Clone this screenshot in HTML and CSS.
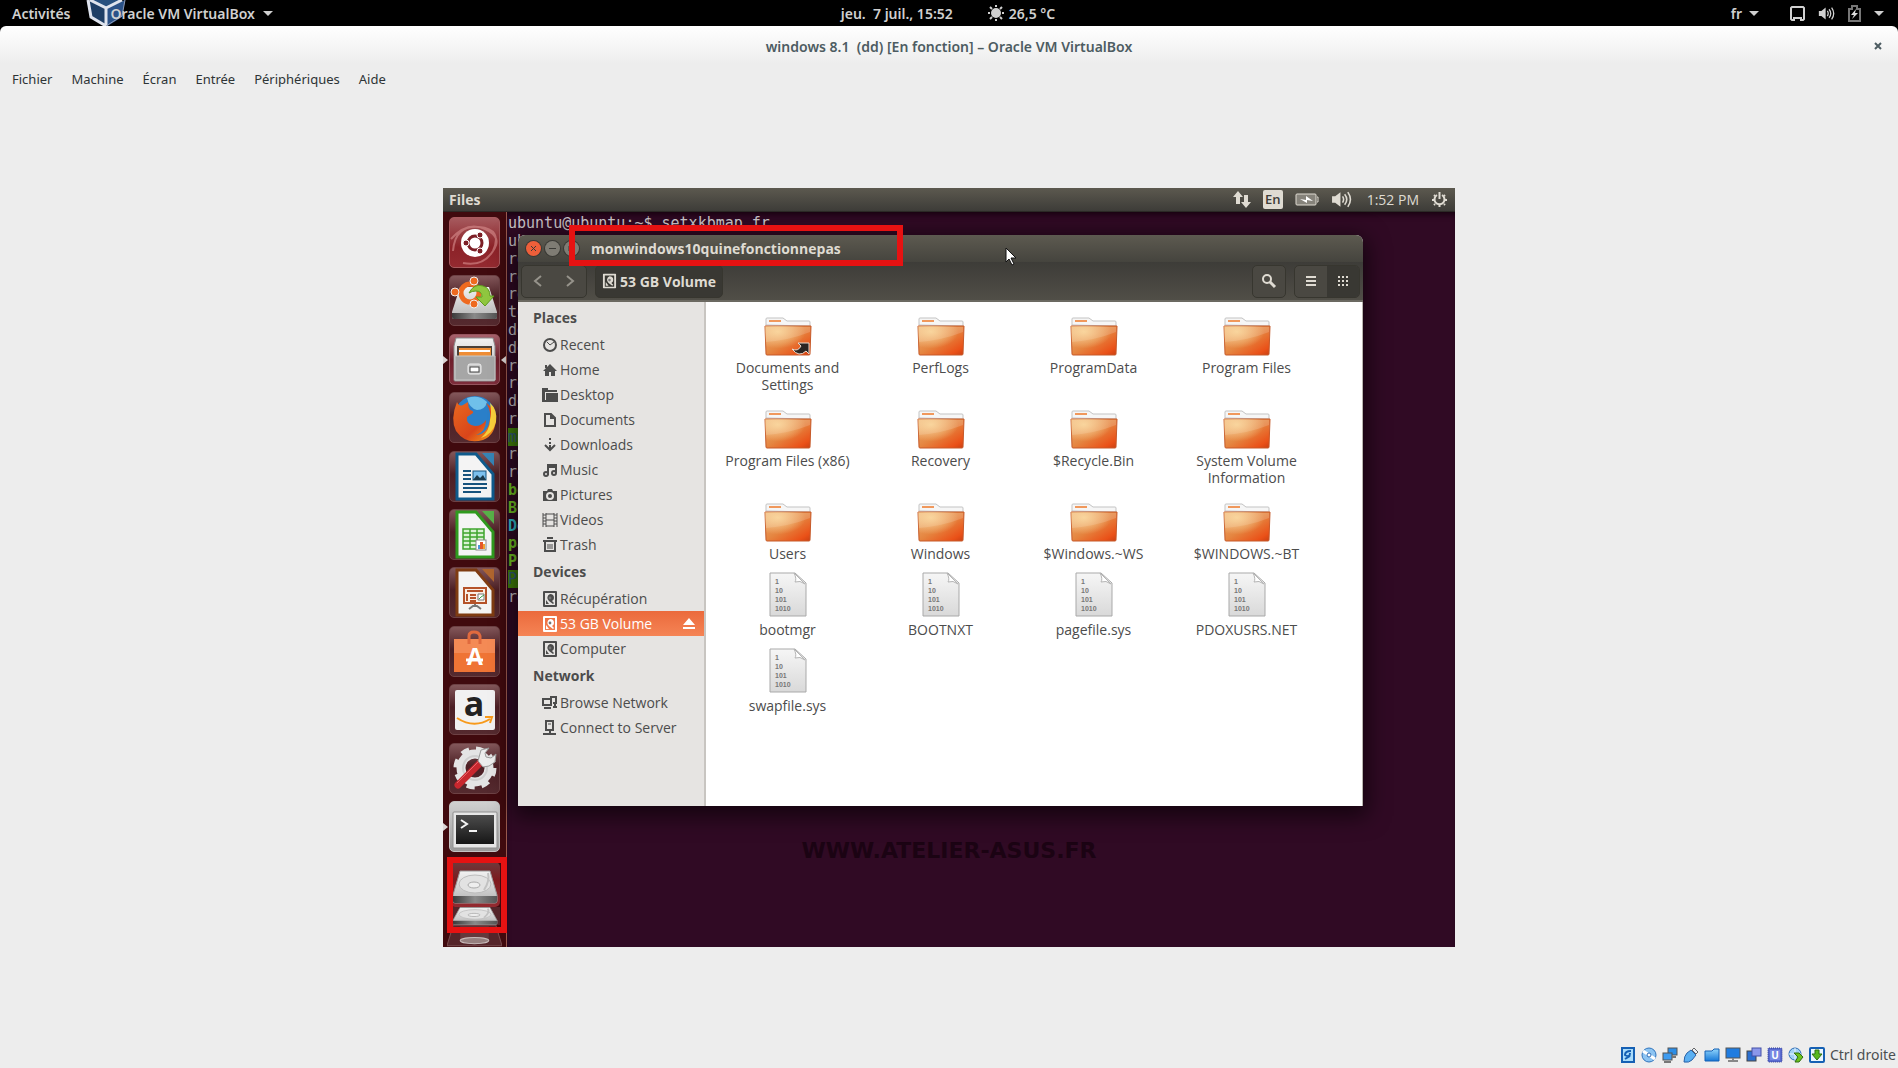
FILE: index.html
```
<!DOCTYPE html>
<html lang="fr">

<head>
    <meta charset="UTF-8">
    <meta name="viewport" content="width=device-width, initial-scale=1.0">
    <title>windows 8.1 (dd) [En fonction] – Oracle VM VirtualBox</title>
    <link rel="stylesheet" href="styles.css">
</head>

<body>
    <!-- Shared icon shapes -->
    <svg class="sprite" width="0" height="0" aria-hidden="true">
        <defs>
            <linearGradient id="gFolder" x1="0" y1="0" x2="1" y2="1">
                <stop offset="0" stop-color="#eeb173" />
                <stop offset="0.5" stop-color="#e58540" />
                <stop offset="0.85" stop-color="#ea5118" />
                <stop offset="1" stop-color="#c93f12" />
            </linearGradient>
            <radialGradient id="gGlow" cx="0.28" cy="0.2" r="0.6">
                <stop offset="0" stop-color="#fbdca4" stop-opacity="0.85" />
                <stop offset="1" stop-color="#fbdca4" stop-opacity="0" />
            </radialGradient>
            <linearGradient id="gPaper" x1="0" y1="0" x2="0" y2="1">
                <stop offset="0" stop-color="#f6f6f6" />
                <stop offset="1" stop-color="#d9d9d9" />
            </linearGradient>
            <linearGradient id="gMetal" x1="0" y1="0" x2="0" y2="1">
                <stop offset="0" stop-color="#f2f2f2" />
                <stop offset="1" stop-color="#b4b4b4" />
            </linearGradient>
            <linearGradient id="gDark" x1="0" y1="0" x2="1" y2="0">
                <stop offset="0" stop-color="#3a3a3a" />
                <stop offset="0.5" stop-color="#8a8a8a" />
                <stop offset="1" stop-color="#555" />
            </linearGradient>
            <linearGradient id="gFox" x1="0" y1="0" x2="1" y2="1">
                <stop offset="0" stop-color="#e8681f" />
                <stop offset="0.6" stop-color="#d9451a" />
                <stop offset="1" stop-color="#f7a81c" />
            </linearGradient>
            <linearGradient id="gBlue" x1="0" y1="0" x2="0" y2="1">
                <stop offset="0" stop-color="#8fd4fb" />
                <stop offset="1" stop-color="#1678d8" />
            </linearGradient>
            <linearGradient id="gShell" x1="0" y1="0" x2="0" y2="1">
                <stop offset="0" stop-color="#4c4c4c" />
                <stop offset="1" stop-color="#161616" />
            </linearGradient>

            <symbol id="folder" viewBox="0 0 48 47">
                <path d="M2 16V10q0-1 1-1h16l4 3h22q1 0 1 1v4z" fill="#f6f6f6" stroke="#c3c3c3" />
                <path d="M5 12h12" stroke="#f0985c" stroke-width="2" />
                <path d="M1 17h46l-1 28q0 1-1 1H3q-1 0-1-1z" fill="url(#gFolder)" stroke="#c65a2a" />
                <path d="M2 18h44v5Q26 31 2 33z" fill="#fff" opacity="0.16" />
                <path d="M1 17h46l-1 28H2z" fill="url(#gGlow)" />
            </symbol>
            <symbol id="binary" viewBox="0 0 48 47">
                <path d="M6 2h25l11 10v33H6z" fill="url(#gPaper)" stroke="#a9a9a9" />
                <path d="M30 2q3 6 1 9 5-2 10 2z" fill="#fff" stroke="#b5b5b5" />
                <g font-family="Liberation Sans" font-weight="bold" font-size="7" fill="#777">
                    <text x="11" y="13">1</text>
                    <text x="11" y="22">10</text>
                    <text x="11" y="31">101</text>
                    <text x="11" y="40">1010</text>
                </g>
            </symbol>
            <symbol id="disk" viewBox="0 0 16 16">
                <path fill-rule="evenodd" d="M2 0h12q1 0 1 1v14q0 1-1 1H2q-1 0-1-1V1q0-1 1-1zM3 2v12h10V2z" />
                <path d="M8 3a4 4 0 0 1 4 4q0 2-2 3l2 2-1 1-4-3a4 4 0 0 1 1-7z" />
                <circle class="hole" cx="8" cy="7" r="1.4" />
                <path d="M4 13V9l3 4z" />
            </symbol>
            <symbol id="sound" viewBox="0 0 20 16">
                <path d="M1 5h3l5-4v14l-5-4H1z" fill="currentColor" />
                <path d="M11 5q2 3 0 6M13 3q4 5 0 10M16 1q5 7 0 14" fill="none" stroke="currentColor" stroke-width="1.5" />
            </symbol>
            <symbol id="drive" viewBox="0 0 46 34">
                <path d="M8 1h30l7 24v6q0 2-2 2H3q-2 0-2-2v-6z" fill="url(#gMetal)" stroke="#999" />
                <path d="M1 26h44v5q0 2-2 2H3q-2 0-2-2z" fill="url(#gDark)" />
                <ellipse cx="23" cy="14" rx="16" ry="9" fill="#e2e2e2" stroke="#bdbdbd" />
                <ellipse cx="22" cy="15" rx="6" ry="3" fill="#eee" stroke="#aaa" />
                <path d="M36 3q2 8-4 17" fill="none" stroke="#c2c2c2" stroke-width="2" />
            </symbol>
        </defs>
    </svg>

    <header class="topbar">
        <div class="topbar-left">
            <button>Activités</button>
            <button class="app-menu">
                <svg class="cube" viewBox="0 0 40 26">
                    <path d="M1 0L4 17 20 27V8z" fill="#1f3f66" />
                    <path d="M39 0l-3 17-16 10V8z" fill="#2b5288" />
                    <path d="M6 0l14 8L34 0z" fill="#27507f" />
                    <path d="M2 0l3 17 15 9V8L4 0M20 8L36 0" fill="none" stroke="#dfe4ee" stroke-width="3" />
                    <path d="M20 26l16-10 3-16" fill="none" stroke="#8e9cb8" stroke-width="1" />
                </svg>
                <span>Oracle VM VirtualBox</span>
                <i class="caret"></i>
            </button>
        </div>
        <div class="topbar-center">
            <span class="date">jeu. &nbsp;7 juil., 15:52</span>
            <svg width="18" height="18" viewBox="0 0 18 18" fill="#d0d0d0">
                <circle cx="9" cy="9" r="5" />
                <path d="M9 1v2M9 15v2M1 9h2M15 9h2M3 3l2 2M13 13l2 2M3 15l2-2M13 5l2-2" stroke="#d0d0d0" stroke-width="2" />
            </svg>
            <span>26,5 °C</span>
        </div>
        <div class="topbar-right">
            <button class="lang">fr <i class="caret"></i></button>
            <svg width="15" height="15" viewBox="0 0 15 15"><path d="M2 1h11l1 1v11l-1 1h-2v-2H4v2H2l-1-1V2z" fill="none" stroke="#d0d0d0" stroke-width="2" /></svg>
            <svg width="17" height="15" viewBox="0 0 20 16"><use href="#sound" /></svg>
            <svg width="13" height="17" viewBox="0 0 13 17">
                <path d="M1 4h3V1h5v3h3v12H1z" fill="none" stroke="#777" stroke-width="2" />
                <path d="M8 4L3 10h3l-2 4 6-6H7z" fill="#ddd" />
            </svg>
            <i class="caret"></i>
        </div>
    </header>

    <div class="vm-window">
        <div class="vm-title">
            <h1>windows 8.1 &nbsp;(dd) [En fonction] – Oracle VM VirtualBox</h1>
            <button class="vm-close" aria-label="Fermer">
                <svg width="8" height="8" viewBox="0 0 8 8"><path d="M1 1l6 6M7 1L1 7" stroke="#4d5c62" stroke-width="2" /></svg>
            </button>
        </div>
        <nav class="vm-menu">
            <button>Fichier</button>
            <button>Machine</button>
            <button>Écran</button>
            <button>Entrée</button>
            <button>Périphériques</button>
            <button>Aide</button>
        </nav>

        <main class="vm-area">
            <div class="screen" lang="en">
                <div class="panel">
                    <strong>Files</strong>
                    <div class="indicators">
                        <svg width="18" height="17" viewBox="0 0 18 17" fill="currentColor">
                            <path d="M5 0l5 6H7v7H3V6H0z" />
                            <path d="M13 17l-5-6h3V4h4v7h3z" />
                        </svg>
                        <span class="kbd">En</span>
                        <svg width="24" height="14" viewBox="0 0 24 14">
                            <rect x="1" y="1" width="20" height="11" rx="1" fill="#86837b" stroke="#dfdbd2" />
                            <path d="M22 4h1v5h-1" fill="none" stroke="#dfdbd2" />
                            <path d="M5 6l6 1V3l7 5-6-1v3z" fill="#fff" />
                        </svg>
                        <svg width="21" height="17" viewBox="0 0 20 16"><use href="#sound" /></svg>
                        <span class="clock">1:52 PM</span>
                        <svg width="17" height="17" viewBox="0 0 17 17" fill="none" stroke="currentColor">
                            <path d="M6 4a5 5 0 1 0 5 0" stroke-width="2" />
                            <path d="M8.500 1v7" stroke-width="2" />
                            <path d="M1 9h2M14 9h2M8.500 14v2M3 4l1 1M14 4l-1 1M3 14l1-1M14 14l-1-1" stroke-width="2" />
                        </svg>
                    </div>
                </div>

                <div class="desktop">
                    <aside class="launcher">
                        <ul class="apps">
                            <li class="tile dash">
                                <svg viewBox="0 0 51 51">
                                    <path d="M4 34Q6 8 30 10T44 34Q34 50 14 46M2 22Q18 4 36 12t8 22" fill="none" stroke="#d98f8f" stroke-width="2" opacity="0.6" />
                                    <circle cx="26" cy="26" r="14" fill="#fff" />
                                    <circle cx="26" cy="26" r="7" fill="none" stroke="#7d1f26" stroke-width="3" />
                                    <g fill="#7d1f26" stroke="#fff" stroke-width="1">
                                        <circle cx="17" cy="26" r="3" />
                                        <circle cx="31" cy="18" r="3" />
                                        <circle cx="31" cy="34" r="3" />
                                    </g>
                                </svg>
                            </li>
                            <li class="tile">
                                <svg viewBox="0 0 51 51">
                                    <path d="M11 12h29l8 25v5q0 2-2 2H5q-2 0-2-2v-5z" fill="url(#gMetal)" />
                                    <path d="M3 38h45v4q0 2-2 2H5q-2 0-2-2z" fill="url(#gDark)" />
                                    <circle cx="21" cy="18" r="9" fill="none" stroke="#ee6a20" stroke-width="5" />
                                    <g fill="#ee6a20" stroke="#f0efee">
                                        <circle cx="6" cy="17" r="4" />
                                        <circle cx="25" cy="6" r="4" />
                                        <circle cx="25" cy="29" r="4" />
                                    </g>
                                    <path d="M20 18Q25 8 34 11q7 2 7 10h4l-9 10-9-9h6q0-6-6-6-4 0-7 2z" fill="#8fc63f" stroke="#5f9a20" />
                                </svg>
                            </li>
                            <li class="tile files active running">
                                <svg viewBox="0 0 51 51">
                                    <path d="M7 4h37l2 8v34q0 1-1 1H6q-1 0-1-1V12z" fill="url(#gMetal)" stroke="#8d8d8d" />
                                    <path d="M8 12h35v12H8z" fill="#4a4038" />
                                    <path d="M10 14h32v8H10z" fill="#ef8d35" />
                                    <path d="M10 17h31" stroke="#fff" stroke-width="2" />
                                    <path d="M6 22h40v24H6z" fill="#a6a6a6" stroke="#c9c9c9" />
                                    <rect x="19" y="30" width="13" height="10" rx="2" fill="#c9c9c9" stroke="#eee" />
                                    <rect x="21" y="33" width="9" height="5" fill="#fff" stroke="#444" />
                                </svg>
                            </li>
                            <li class="tile">
                                <svg viewBox="0 0 51 51">
                                    <circle cx="26" cy="25" r="21" fill="#2a7fc9" />
                                    <path d="M18 6q12-4 20 4-2 8-10 8-8-2-10-12z" fill="#6fc0ea" />
                                    <path d="M8 10q2 5 6 3l5-3q0 5 2 8 4 1 3 3l-6 4q-1 8 8 9 7 0 11-6 0 12-10 15 12-1 14-16 1-9-4-16 8 5 10 14 0 18-13 23-17 5-27-9Q1 27 8 10z" fill="url(#gFox)" />
                                    <path d="M41 11q8 7 6 19-3 12-15 16 9-8 9-18 2-8 0-17z" fill="#f8cf3a" />
                                </svg>
                            </li>
                            <li class="tile">
                                <svg viewBox="0 0 51 51">
                                    <path d="M8 3h19l17 20v25H8z" fill="#f4f4f4" stroke="#0f5b8c" stroke-width="3" />
                                    <path d="M33 2h12v13z" fill="#3584b5" />
                                    <path d="M14 20h8M14 24h8M14 28h8M14 33h24M14 37h24M14 41h18" stroke="#17537d" stroke-width="2" />
                                    <rect x="24" y="20" width="13" height="9" fill="#7cc0ee" stroke="#17537d" />
                                    <path d="M24 29l4-5 3 3 3-3 3 5z" fill="#1b3a4c" />
                                </svg>
                            </li>
                            <li class="tile">
                                <svg viewBox="0 0 51 51">
                                    <path d="M8 3h19l17 20v25H8z" fill="#f4f4f4" stroke="#2f9a1e" stroke-width="3" />
                                    <path d="M33 2h12v13z" fill="#58b148" />
                                    <path d="M14 20h21v20H14z" fill="#d9f2d3" />
                                    <path d="M14 20h21v20H14zM14 24h21M14 28h21M14 32h21M14 36h21M21 20v20M28 20v20" fill="none" stroke="#3fa52e" stroke-width="1.500" />
                                    <rect x="27" y="31" width="10" height="10" fill="#fff" stroke="#888" />
                                    <path d="M29 36h2v4h-2z" fill="#4b97d8" />
                                    <path d="M31 33h3v7h-3z" fill="#e4572a" />
                                    <path d="M34 35h2v5h-2z" fill="#f0a22e" />
                                </svg>
                            </li>
                            <li class="tile">
                                <svg viewBox="0 0 51 51">
                                    <path d="M8 3h19l17 20v25H8z" fill="#f4f4f4" stroke="#7f3c12" stroke-width="3" />
                                    <path d="M33 2h12v13z" fill="#b0662f" />
                                    <rect x="15" y="21" width="22" height="15" fill="#fbeee4" stroke="#b5532a" stroke-width="2" />
                                    <path d="M18 24h16" stroke="#b5532a" stroke-width="2" />
                                    <path d="M18 27v7M21 28h6M21 31h6M21 34h6" stroke="#b5532a" stroke-width="2" />
                                    <path d="M29 27h6v6h-6z" fill="#fff" stroke="#777" />
                                    <path d="M30 32l2-2 3-2" stroke="#3aa34a" fill="none" />
                                    <path d="M26 37v3M20 42l4-3h4l4 3" fill="none" stroke="#777" stroke-width="2" />
                                </svg>
                            </li>
                            <li class="tile">
                                <svg viewBox="0 0 51 51">
                                    <path d="M5 13h41v33H5z" fill="#ef7435" />
                                    <path d="M5 13h41v14H5z" fill="#f48a55" />
                                    <path d="M20 18V10q0-4 5-4t6 4v8" fill="none" stroke="#e06a3e" stroke-width="3" />
                                    <text x="26" y="39" text-anchor="middle" font-family="Open Sans" font-weight="bold" font-size="23" fill="#fff">A</text>
                                    <path d="M17 34h17" stroke="#fff" stroke-width="3" />
                                </svg>
                            </li>
                            <li class="tile">
                                <svg viewBox="0 0 51 51">
                                    <rect x="6" y="6" width="40" height="40" rx="2" fill="#f1f1f1" />
                                    <text x="25" y="32" text-anchor="middle" font-family="Open Sans" font-weight="bold" font-size="34" fill="#222">a</text>
                                    <path d="M8 34q17 11 33 1" fill="none" stroke="#f79a1c" stroke-width="2" />
                                    <path d="M36 33h7l-2 6" fill="none" stroke="#f79a1c" stroke-width="2" />
                                </svg>
                            </li>
                            <li class="tile">
                                <svg viewBox="0 0 51 51">
                                    <circle cx="26" cy="25" r="14" fill="none" stroke="#e4e4e4" stroke-width="9" />
                                    <circle cx="26" cy="25" r="19" fill="none" stroke="#e4e4e4" stroke-width="5" stroke-dasharray="8 7" />
                                    <circle cx="26" cy="25" r="12" fill="none" stroke="#cfcfcf" stroke-width="2" />
                                    <path d="M9 42l24-24" stroke="#c8272e" stroke-width="7" stroke-linecap="round" />
                                    <path d="M8 40l22-22" stroke="#e8646a" stroke-width="1" />
                                    <path d="M29 18l3-11 8-2-4 5 1 4 5 1 5-4-1 8-6 4-6 1z" fill="#ececec" stroke="#9a9a9a" />
                                </svg>
                            </li>
                            <li class="tile term running">
                                <svg viewBox="0 0 51 51">
                                    <rect x="4" y="11" width="44" height="36" rx="1" fill="#e6e6e6" stroke="#8f8f8f" />
                                    <rect x="7" y="14" width="38" height="29" fill="url(#gShell)" />
                                    <path d="M12 19l6 4-6 4M20 30h8" fill="none" stroke="#f3f3f3" stroke-width="2" />
                                </svg>
                            </li>
                        </ul>
                        <ul class="drives">
                            <li class="drive mounted"><svg viewBox="0 0 46 34"><use href="#drive" /></svg></li>
                            <li class="drive folded"><svg viewBox="0 0 46 34" preserveAspectRatio="none"><use href="#drive" /></svg></li>
                            <li class="trash">
                                <svg viewBox="0 0 54 21">
                                    <path d="M6 0h42l6 20H0z" fill="#55252a" stroke="#7a4d50" />
                                    <path d="M13 1h28v13q-14 6-28 0z" fill="#64393c" />
                                    <ellipse cx="27" cy="15" rx="14" ry="3" fill="#96807f" stroke="#c9bcbb" />
                                </svg>
                            </li>
                        </ul>
                        <div class="mark mark-drives"></div>
                    </aside>

                    <div class="workspace">
                        <div class="terminal">
                            <p>ubuntu@ubuntu:~$ setxkbmap fr</p>
                            <p>ub</p>
                            <p>ro</p>
                            <p>ro</p>
                            <p>ro</p>
                            <p>to</p>
                            <p>de</p>
                            <p>de</p>
                            <p>ro</p>
                            <p>ro</p>
                            <p>de</p>
                            <p>ro</p>
                            <p><b class="ow">mo</b></p>
                            <p>ro</p>
                            <p>ro</p>
                            <p><b class="exec">bo</b></p>
                            <p><b class="exec">BO</b></p>
                            <p><b class="link">Do</b></p>
                            <p><b class="exec">pa</b></p>
                            <p><b class="exec">PD</b></p>
                            <p><b class="ow">Pr</b></p>
                            <p>ro</p>
                        </div>
                        <div class="watermark">WWW.ATELIER-ASUS.FR</div>

                        <section class="files-window">
                            <div class="titlebar">
                                <button class="dot close" aria-label="Close"><svg viewBox="0 0 15 15"><path d="M5 5l5 5M10 5l-5 5" /></svg></button>
                                <button class="dot" aria-label="Minimize"><svg viewBox="0 0 15 15"><path d="M4 7.500h7" /></svg></button>
                                <button class="dot" aria-label="Maximize"><svg viewBox="0 0 15 15"><path d="M5 5h5v5H5z" /></svg></button>
                                <h2>monwindows10quinefonctionnepas</h2>
                            </div>
                            <div class="toolbar">
                                <div class="group">
                                    <button aria-label="Back"><svg width="16" height="16" viewBox="0 0 16 16"><path d="M11 3L5 8l6 5" fill="none" stroke="#96938b" stroke-width="2" /></svg></button>
                                    <button aria-label="Forward"><svg width="16" height="16" viewBox="0 0 16 16"><path d="M5 3l6 5-6 5" fill="none" stroke="#96938b" stroke-width="2" /></svg></button>
                                </div>
                                <button class="path">
                                    <svg width="15" height="16" viewBox="0 0 16 16" fill="currentColor"><use href="#disk" /></svg>
                                    53 GB Volume
                                </button>
                                <div class="group search">
                                    <button aria-label="Search"><svg width="16" height="16" viewBox="0 0 16 16" fill="none" stroke="currentColor"><circle cx="6" cy="6" r="4" stroke-width="2" /><path d="M9 9l5 5" stroke-width="3" /></svg></button>
                                </div>
                                <div class="group views">
                                    <button aria-label="List view"><svg width="12" height="12" viewBox="0 0 12 12"><path d="M1 2h10M1 6h10M1 10h10" stroke="currentColor" stroke-width="2" /></svg></button>
                                    <button class="on" aria-label="Icon view"><svg width="12" height="12" viewBox="0 0 12 12"><path d="M1 2h10M1 6h10M1 10h10" stroke="currentColor" stroke-width="2" stroke-dasharray="2" /></svg></button>
                                </div>
                            </div>

                            <div class="files-body">
                                <nav class="sidebar">
                                    <h3>Places</h3>
                                    <a href="#"><svg viewBox="0 0 16 16"><circle class="line" cx="8" cy="8" r="6" /><path class="line thin" d="M5 5l3 3 4-3" /></svg>Recent</a>
                                    <a href="#"><svg viewBox="0 0 16 16"><path d="M8 2l7 7h-2v5H9v-4H7v4H3V9H1zM3 3h2v3H3z" /></svg>Home</a>
                                    <a href="#"><svg viewBox="0 0 16 16"><path d="M0 1h6v2h9v2H3v8H0zM4 6h12v9H4z" /><path d="M0 13h16v2H0z" /></svg>Desktop</a>
                                    <a href="#"><svg viewBox="0 0 16 16"><path class="line" d="M3 2h6l4 4v8H3z" /><path d="M8 1v6h5z" /></svg>Documents</a>
                                    <a href="#"><svg viewBox="0 0 16 16"><path d="M7 1h2v2H7zM7 5h2v2H7zM7 8h2v4H7z" /><path class="line" d="M3 8l5 5 5-5" /></svg>Downloads</a>
                                    <a href="#"><svg viewBox="0 0 16 16"><path class="line" d="M6 13V3h8v8M6 5h8" /><circle class="line" cx="4" cy="12" r="2" /><circle class="line" cx="12" cy="11" r="2" /></svg>Music</a>
                                    <a href="#"><svg viewBox="0 0 16 16"><path fill-rule="evenodd" d="M1 4h4l1-2h4l1 2h4v10H1zM8 5a4 4 0 1 0 0 8 4 4 0 0 0 0-8z" /><circle cx="8" cy="9" r="2" /></svg>Pictures</a>
                                    <a href="#"><svg viewBox="0 0 16 16"><path class="line thin" d="M1 1v14M4 1v14M12 1v14M15 1v14M4 2h8M4 8h8M4 14h8M1 3h3M1 6h3M1 9h3M1 12h3M12 3h3M12 6h3M12 9h3M12 12h3" /></svg>Videos</a>
                                    <a href="#"><svg viewBox="0 0 16 16"><path class="line" d="M3 5v9h10V5M1 4h14M5 1h6" /><path class="line thin" d="M6 7v5M8 7v5M10 7v5" /></svg>Trash</a>
                                    <h3>Devices</h3>
                                    <a href="#"><svg viewBox="0 0 16 16"><use href="#disk" /></svg>Récupération</a>
                                    <a href="#" class="selected"><svg viewBox="0 0 16 16"><use href="#disk" /></svg>53 GB Volume
                                        <svg class="eject" viewBox="0 0 14 14"><path d="M7 1l6 7H1zM1 10h12v2H1z" /></svg></a>
                                    <a href="#"><svg viewBox="0 0 16 16"><use href="#disk" /></svg>Computer</a>
                                    <h3>Network</h3>
                                    <a href="#"><svg viewBox="0 0 16 16"><path class="line" d="M1 4h8v6H1zM8 2h6v6h-3M13 9v3" /><path d="M2 12h7v2H2zM11 11h4v2h-4z" /></svg>Browse Network</a>
                                    <a href="#"><svg viewBox="0 0 16 16"><path class="line" d="M4 1h7v9H4zM8 10v4M1 14h13" /><path class="line thin" d="M6 4h3" /></svg>Connect to Server</a>
                                </nav>

                                <ul class="icons">
                                    <li><svg viewBox="0 0 48 47"><use href="#folder" /><path d="M28 40q6 3 9-3l-3-3h11v11l-3-3q-7 7-14-2z" fill="#2b2522" stroke="#e8d8cc" /></svg>Documents and Settings</li>
                                    <li><svg viewBox="0 0 48 47"><use href="#folder" /></svg>PerfLogs</li>
                                    <li><svg viewBox="0 0 48 47"><use href="#folder" /></svg>ProgramData</li>
                                    <li><svg viewBox="0 0 48 47"><use href="#folder" /></svg>Program Files</li>
                                    <li><svg viewBox="0 0 48 47"><use href="#folder" /></svg>Program Files (x86)</li>
                                    <li><svg viewBox="0 0 48 47"><use href="#folder" /></svg>Recovery</li>
                                    <li><svg viewBox="0 0 48 47"><use href="#folder" /></svg>$Recycle.Bin</li>
                                    <li><svg viewBox="0 0 48 47"><use href="#folder" /></svg>System Volume Information</li>
                                    <li><svg viewBox="0 0 48 47"><use href="#folder" /></svg>Users</li>
                                    <li><svg viewBox="0 0 48 47"><use href="#folder" /></svg>Windows</li>
                                    <li><svg viewBox="0 0 48 47"><use href="#folder" /></svg>$Windows.~WS</li>
                                    <li><svg viewBox="0 0 48 47"><use href="#folder" /></svg>$WINDOWS.~BT</li>
                                    <li><svg viewBox="0 0 48 47"><use href="#binary" /></svg>bootmgr</li>
                                    <li><svg viewBox="0 0 48 47"><use href="#binary" /></svg>BOOTNXT</li>
                                    <li><svg viewBox="0 0 48 47"><use href="#binary" /></svg>pagefile.sys</li>
                                    <li><svg viewBox="0 0 48 47"><use href="#binary" /></svg>PDOXUSRS.NET</li>
                                    <li><svg viewBox="0 0 48 47"><use href="#binary" /></svg>swapfile.sys</li>
                                </ul>
                            </div>
                        </section>

                        <div class="mark mark-title"></div>
                        <svg class="cursor" viewBox="0 0 12 19"><path d="M1 1v14l3-3 3 6 2-1-3-6h5z" fill="#fff" stroke="#111" /></svg>
                    </div>
                </div>
            </div>
        </main>

        <footer class="statusbar">
            <svg viewBox="0 0 16 16"><rect x="2" y="1" width="12" height="14" fill="#a9dcfb" stroke="#1560b4" stroke-width="2" /><path d="M11 4q-6 0-6 4 5 3 5-2M5 12l5-3" fill="none" stroke="#1560b4" stroke-width="2" /></svg>
            <svg viewBox="0 0 16 16"><circle cx="8" cy="8" r="7" fill="#8cc4f2" stroke="#2f74bd" /><path d="M8 8L2 4M8 8l6 4" stroke="#fff" stroke-width="3" /><circle cx="8" cy="8" r="2" fill="#fff" stroke="#2a6ab5" /></svg>
            <svg viewBox="0 0 16 16"><rect x="6" y="1" width="9" height="7" fill="#2b8de6" stroke="#555" /><rect x="1" y="6" width="9" height="7" fill="#3d9bf0" stroke="#555" /><path d="M2 15h7M10 10h4" stroke="#777" stroke-width="2" /></svg>
            <svg viewBox="0 0 16 16"><path d="M1 15q0-6 3-9l4-3 5 5-4 5q-3 3-8 2z" fill="#5bb0f2" stroke="#2a62a8" /><path d="M9 3l2-2 4 4-2 2z" fill="#e8eef5" stroke="#666" /></svg>
            <svg viewBox="0 0 16 16"><path d="M1 14V4h7l2-2h5v12z" fill="url(#gBlue)" stroke="#1560b4" /></svg>
            <svg viewBox="0 0 16 16"><rect x="1" y="1" width="14" height="10" fill="#1f7ce0" stroke="#555" /><path d="M3 14h10M8 11v3" stroke="#888" stroke-width="2" /></svg>
            <svg viewBox="0 0 16 16"><rect x="1" y="4" width="9" height="10" fill="#2b6fd0" stroke="#444" /><rect x="6" y="1" width="9" height="8" fill="#8b97ea" stroke="#4450a8" /></svg>
            <svg viewBox="0 0 16 16"><rect x="1" y="1" width="14" height="14" rx="1" fill="#5a6bd0" stroke="#2e3a90" stroke-dasharray="1" /><rect x="3" y="3" width="10" height="10" fill="#7686e2" /><text x="8" y="12" text-anchor="middle" font-family="Open Sans" font-size="10" font-weight="bold" fill="#fff">U</text></svg>
            <svg viewBox="0 0 16 16"><circle cx="7" cy="7" r="6" fill="#a3d2f6" stroke="#2a6ab5" /><path d="M7 1v12M1 7h12" stroke="#e9f5fe" /><path d="M6 6h5l4 4-4 5H7l3-5z" fill="#6cc21e" stroke="#2f6f10" /></svg>
            <svg viewBox="0 0 16 16"><rect x="1" y="1" width="14" height="14" rx="1" fill="#eaf6ff" stroke="#1560b4" stroke-width="2" /><path d="M6 3h4v4h3l-5 6-5-6h3z" fill="#58b81c" stroke="#2f6f10" /></svg>
            <span>Ctrl droite</span>
        </footer>
    </div>
</body>

</html>
```
FILE: styles.css
```
* {
    box-sizing: border-box;
}

body {
    display: flex;
    flex-direction: column;
    min-height: 100vh;
    margin: 0;
    background-color: #000;
    font-family: "Noto Sans", "Open Sans", sans-serif;
    font-size: 14px;
}

button {
    margin: 0;
    padding: 0;
    border: none;
    background: none;
    color: inherit;
    font: inherit;
    cursor: pointer;
}

h1, h2, h3, p, ul {
    margin: 0;
    padding: 0;
    font-size: inherit;
    list-style: none;
}

svg {
    display: block;
    flex: none;
}

.sprite {
    position: absolute;
}

/* GNOME top bar */
.topbar {
    display: grid;
    grid-template-columns: 1fr auto 1fr;
    align-items: center;
    height: 26px;
    padding: 0 14px 0 12px;
    color: #d0d0d0;
    font-weight: 600;
}

.topbar-left,
.topbar-center,
.topbar-right {
    display: flex;
    align-items: center;
}

.app-menu {
    display: flex;
    align-items: center;
    margin-left: 16px;
}

.app-menu span {
    margin-left: -16px;
    margin-right: 8px;
    z-index: 1;
}

.cube {
    width: 40px;
    height: 26px;
}

.caret {
    display: inline-block;
    border: 5px solid transparent;
    border-top-color: #d0d0d0;
    border-bottom: none;
}

.topbar-center {
    gap: 4px;
}

.date {
    margin-right: 30px;
}

.topbar-right {
    justify-content: flex-end;
    gap: 13px;
}

.lang {
    display: flex;
    align-items: center;
    gap: 7px;
    margin-right: 18px;
}

/* VirtualBox window */
.vm-window {
    display: flex;
    flex: 1;
    flex-direction: column;
    border-radius: 6px 6px 0 0;
    background: linear-gradient(#fff, #ededed 38px);
    color: #2e3436;
}

.vm-title {
    display: flex;
    align-items: center;
    height: 40px;
    padding: 0 16px 0 24px;
}

.vm-title h1 {
    flex: 1;
    color: #4d5c62;
    font-weight: 600;
    text-align: center;
}

.vm-menu {
    display: flex;
    align-items: center;
    gap: 19px;
    height: 28px;
    padding: 0 12px 2px;
    font-size: 13px;
}

.vm-area {
    display: flex;
    flex: 1;
    align-items: center;
    justify-content: center;
}

.statusbar {
    display: flex;
    align-items: center;
    justify-content: flex-end;
    gap: 5px;
    height: 27px;
    padding-right: 2px;
    color: #4a4f51;
}

.statusbar svg {
    width: 16px;
    height: 16px;
}

/* Guest screen */
.screen {
    display: flex;
    flex-direction: column;
    width: 1012px;
    max-width: 100%;
    aspect-ratio: 4 / 3;
    overflow: hidden;
    background-color: #300a24;
    font-family: "Open Sans", "Noto Sans", sans-serif;
}

.panel {
    display: flex;
    align-items: center;
    justify-content: space-between;
    height: 24px;
    padding: 0 7px 0 6px;
    background: linear-gradient(#5c594f, #3d3c38);
    border-bottom: 1px solid #2c2a26;
    color: #dfdbd2;
}

.indicators {
    display: flex;
    align-items: center;
    gap: 12px;
}

.kbd {
    width: 20px;
    border-radius: 2px;
    background-color: #dfdbd2;
    color: #3d3c38;
    font-size: 13px;
    font-weight: 600;
    line-height: 19px;
    text-align: center;
}

.clock {
    margin-left: 3px;
}

.desktop {
    display: flex;
    flex: 1;
    min-height: 0;
}

/* Launcher */
.launcher {
    position: relative;
    width: 64px;
    padding-top: 5px;
    border-right: 1px solid #9a5a4e;
    background-color: #400a0e;
}

.apps {
    display: flex;
    flex-direction: column;
    justify-content: space-between;
    height: 635px;
    padding-left: 6px;
}

.tile {
    position: relative;
    width: 51px;
    height: 51px;
    border: 1px solid #6d4144;
    border-radius: 5px;
    background: linear-gradient(#83575a, #4c1f24 45%, #552a2f);
}

.tile svg {
    width: 51px;
    height: 51px;
    margin: -1px;
    overflow: visible;
}

.dash {
    border-color: #a85a5e;
    background: linear-gradient(#a65a5e, #8c2228 60%, #942a30);
}

.files {
    border-color: #96555e;
    background: linear-gradient(#a8626c, #6e1f2c 50%, #7d2c3a);
}

.term {
    border-color: #c4c4c4;
    background: linear-gradient(#d0d0d0, #9a9a9a);
}

.running::before,
.active::after {
    content: "";
    position: absolute;
    top: 21px;
    border: 4px solid transparent;
}

.running::before {
    left: -7px;
    border-left: 5px solid #dcd6d6;
    border-right: none;
}

.active::after {
    right: -7px;
    border-right: 5px solid #dcd6d6;
    border-left: none;
}

.drives {
    display: flex;
    flex-direction: column;
    align-items: center;
    padding: 10px 4px 0 4px;
}

.drive {
    display: flex;
    justify-content: center;
    width: 50px;
    background-color: #55252a;
}

.drive svg {
    width: 46px;
}

.mounted {
    height: 45px;
    padding-top: 5px;
    background: linear-gradient(#6d3a3c, #7d1a1e 40%, #942a30);
    border-radius: 5px;
}

.folded svg {
    height: 18px;
}

.trash svg {
    width: 55px;
    height: 22px;
}

/* Red highlight boxes */
.mark {
    position: absolute;
    border: 6px solid #e61212;
}

.mark-drives {
    top: 645px;
    left: 4px;
    width: 60px;
    height: 76px;
}

.mark-title {
    top: 13px;
    left: 62px;
    width: 334px;
    height: 41px;
}

/* Workspace */
.workspace {
    position: relative;
    flex: 1;
    box-shadow: inset 0 5px 6px -3px #14020e;
}

.terminal {
    display: grid;
    grid-auto-rows: 1fr;
    align-items: center;
    height: 394px;
    padding: 3px 0 0 1px;
    color: #c9c3c7;
    font-family: "DejaVu Sans Mono", monospace;
    font-size: 15px;
    line-height: 17px;
}

.exec {
    color: #73c423;
}

.link {
    color: #34c2cf;
}

.ow {
    background-color: #418009;
    color: #2f5a78;
    font-weight: normal;
}

.watermark {
    position: absolute;
    right: 0;
    bottom: 84px;
    left: 0;
    margin-right: 64px;
    color: #1b0313;
    font-family: "DejaVu Sans", sans-serif;
    font-size: 22px;
    font-weight: bold;
    text-align: center;
}

.cursor {
    position: absolute;
    top: 35px;
    left: 498px;
    width: 12px;
    height: 19px;
}

/* Nautilus */
.files-window {
    position: absolute;
    top: 23px;
    right: 92px;
    left: 11px;
    border-radius: 7px 7px 0 0;
    background-color: #fff;
    box-shadow: 0 6px 22px 4px rgba(0, 0, 0, 0.6);
    color: #4c4c4c;
}

.titlebar {
    display: flex;
    align-items: center;
    gap: 4px;
    height: 27px;
    padding-left: 8px;
    border-radius: 7px 7px 0 0;
    background: linear-gradient(#5d5a50, #45443e);
    color: #dfdbd2;
}

.titlebar h2 {
    margin-left: 8px;
}

.dot {
    width: 15px;
    height: 15px;
    border-radius: 50%;
    background-color: #7f7c74;
    box-shadow: 0 0 0 1px #3a3935;
}

.dot svg {
    fill: none;
    stroke: #3c3b37;
}

.close {
    background-color: #ee5f3a;
}

.toolbar {
    display: flex;
    align-items: center;
    height: 40px;
    padding: 0 3px;
    border-bottom: 2px solid #6b6961;
    background: linear-gradient(#3d3c38, #504e47);
    color: #dfdbd2;
}

.group {
    display: flex;
    overflow: hidden;
    border: 1px solid #37362f;
    border-radius: 5px;
    background-color: #4a4842;
}

.group button {
    display: flex;
    align-items: center;
    justify-content: center;
    width: 32px;
    height: 31px;
}

.group .on {
    background-color: #393833;
}

.path {
    display: flex;
    align-items: center;
    gap: 3px;
    height: 33px;
    margin-left: 8px;
    padding: 0 6px;
    border: 1px solid #37362f;
    border-radius: 5px;
    background-color: #393833;
    font-weight: bold;
}

.hole {
    fill: #777;
}

.search {
    margin-left: auto;
}

.views {
    margin-left: 8px;
}

.files-body {
    display: flex;
    height: 504px;
    border-right: 1px solid #b9b6b0;
}

.sidebar {
    width: 188px;
    padding-top: 1px;
    border-right: 2px solid #c8c5c1;
    background-color: #e6e4e2;
}

.sidebar h3 {
    padding-left: 15px;
    line-height: 29px;
}

.sidebar a {
    display: flex;
    align-items: center;
    gap: 2px;
    height: 25px;
    padding-left: 24px;
    color: #4c4c4c;
    text-decoration: none;
}

.sidebar svg {
    width: 16px;
    height: 16px;
    fill: #4c4c4c;
}

.sidebar .line {
    fill: none;
    stroke: #4c4c4c;
    stroke-width: 2;
}

.sidebar .thin {
    stroke-width: 1;
}

.sidebar .selected {
    background: linear-gradient(#eb6a3c, #f58455);
    color: #fff;
}

.sidebar .selected svg {
    fill: #fff;
}

.sidebar .eject {
    width: 14px;
    height: 14px;
    margin-right: 8px;
    margin-left: auto;
}

.icons {
    display: grid;
    flex: 1;
    grid-template-columns: repeat(4, 137px);
    gap: 9px 16px;
    align-content: start;
    padding: 7px 0 0 13px;
    line-height: 17px;
    text-align: center;
}

.icons svg {
    width: 48px;
    height: 47px;
    margin: 0 auto 3px;
}
```
